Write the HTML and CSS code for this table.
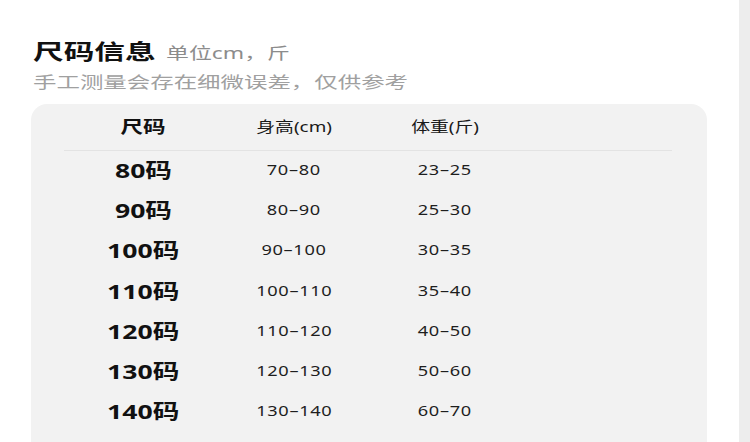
FILE: index.html
```html
<!DOCTYPE html>
<html lang="zh">
<head>
<meta charset="utf-8">
<link rel="stylesheet" href="styles.css">
</head>
<body>
<div class="page">
  <main class="main">
    <header class="head">
      <h1 class="title"><span class="t-main">尺码信息</span><span class="t-unit">单位cm，斤</span></h1>
      <p class="note"><span class="t-note">手工测量会存在细微误差，仅供参考</span></p>
    </header>
    <section class="card">
      <div class="row hrow">
        <div class="c size"><span>尺码</span></div>
        <div class="c"><span>身高(cm)</span></div>
        <div class="c"><span>体重(斤)</span></div>
      </div>
      <div class="rule"></div>
      <div class="row"><div class="c size"><span>80码</span></div><div class="c"><span>70–80</span></div><div class="c"><span>23–25</span></div></div>
      <div class="row"><div class="c size"><span>90码</span></div><div class="c"><span>80–90</span></div><div class="c"><span>25–30</span></div></div>
      <div class="row"><div class="c size"><span>100码</span></div><div class="c"><span>90–100</span></div><div class="c"><span>30–35</span></div></div>
      <div class="row"><div class="c size"><span>110码</span></div><div class="c"><span>100–110</span></div><div class="c"><span>35–40</span></div></div>
      <div class="row"><div class="c size"><span>120码</span></div><div class="c"><span>110–120</span></div><div class="c"><span>40–50</span></div></div>
      <div class="row"><div class="c size"><span>130码</span></div><div class="c"><span>120–130</span></div><div class="c"><span>50–60</span></div></div>
      <div class="row"><div class="c size"><span>140码</span></div><div class="c"><span>130–140</span></div><div class="c"><span>60–70</span></div></div>
    </section>
  </main>
  <aside class="edge"></aside>
</div>
</body>
</html>
```
FILE: styles.css
```css
* { box-sizing: border-box; }
html, body { margin: 0; padding: 0; background: #fff; }
body {
  font-family: "Noto Sans", "Noto Sans CJK SC", sans-serif;
  color: #111;
  overflow: hidden;
}
.page {
  display: flex;
  width: 750px;
  height: 442px;
  overflow: hidden;
}
.main {
  flex: 0 0 739px;
  padding: 36px 0 0 31px;
}
.edge {
  flex: 0 0 11px;
  background: #ededed;
}
.head { padding-left: 2px; }
.title {
  margin: 0;
  display: flex;
  align-items: baseline;
  line-height: 30px;
  font-weight: 700;
}
.t-main {
  display: inline-block;
  font-size: 21px;
  color: #111;
  transform: scaleX(1.46);
  transform-origin: left center;
}
.t-unit {
  display: inline-block;
  margin-left: 49px;
  font-size: 16px;
  font-weight: 400;
  color: #8c8c8c;
  transform: scaleX(1.43);
  transform-origin: left center;
}
.note {
  margin: 2px 0 0;
  font-size: 16px;
  line-height: 24px;
  color: #a0a0a0;
}
.t-note {
  display: inline-block;
  transform: scaleX(1.465);
  transform-origin: left center;
}
.card {
  margin-top: 10px;
  width: 676px;
  height: 400px;
  background: #f2f2f2;
  border-radius: 16px;
  padding: 0 0 0 36.5px;
}
.row {
  display: grid;
  grid-template-columns: 151px 151px 151px;
  align-items: center;
  height: 40.2px;
  padding-bottom: 5px;
  font-size: 14px;
  letter-spacing: 0.5px;
  color: #1e1e1e;
}
.c { text-align: center; }
.c span {
  display: inline-block;
  transform: scaleX(1.3);
}
.hrow {
  height: 46px;
  padding-bottom: 4px;
  font-size: 14.5px;
  letter-spacing: 0;
  color: #1a1a1a;
}
.size {
  font-size: 20px;
  font-weight: 700;
  letter-spacing: 0;
  color: #111;
}
.size span { transform: scaleX(1.33); }
.hrow .size { font-size: 17px; }
.rule {
  height: 1px;
  margin: 0 0 1px -3.5px;
  width: 608px;
  background: #e3e3e3;
}
```
